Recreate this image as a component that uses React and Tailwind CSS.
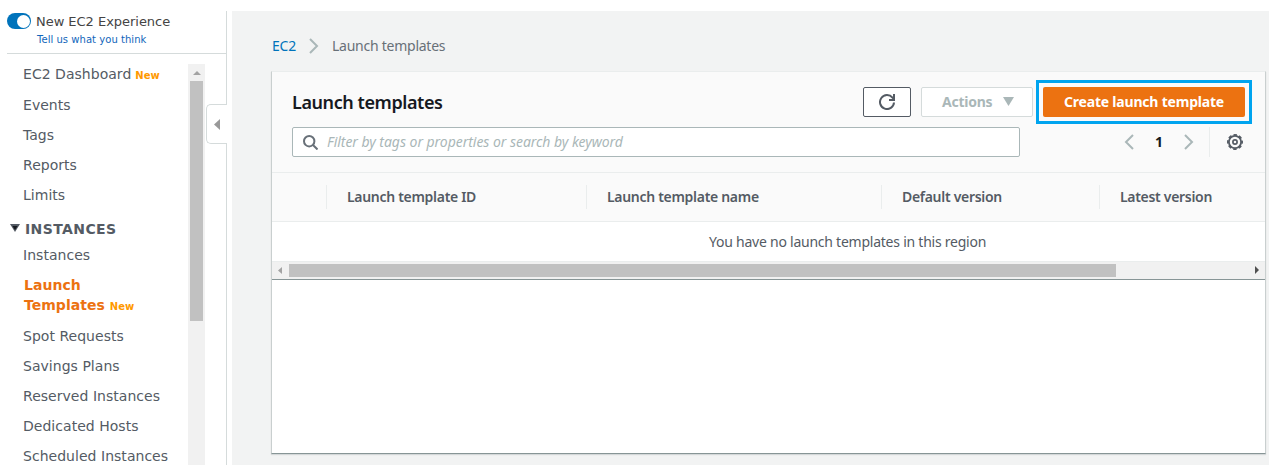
import React from 'react';

function NavItem({ children, className = 'h-[30px]' }) {
  return (
    <li className={`flex shrink-0 items-center whitespace-nowrap pl-[23px] ${className}`}>{children}</li>
  );
}

function Toggle() {
  return (
    <span className="flex h-4 w-6 items-center justify-end rounded-full bg-[#0073bb] pr-px">
      <span className="h-[13px] w-[13px] rounded-full bg-white" />
    </span>
  );
}

function Sidebar() {
  return (
    <aside className="relative flex w-[227px] shrink-0 flex-col border-r border-[#d5dbdb] font-['DejaVu_Sans',sans-serif] text-[#545b64]">
      <div className="ml-[7px] h-[43px] shrink-0 border-b border-[#d5dbdb] pt-[2px]">
        <div className="flex h-4 items-center">
          <Toggle />
          <span className="ml-[5px] mt-[2px] whitespace-nowrap text-[13px] leading-4 tracking-[-0.03px] text-[#444]">New EC2 Experience</span>
        </div>
        <a className="ml-[30px] mt-[5px] block whitespace-nowrap text-[10px] leading-3 tracking-[0.04px] text-[#1166bb]">Tell us what you think</a>
      </div>
      <div className="mt-[10px] flex min-h-0 flex-1">
        <ul className="-mt-[5px] flex w-[188px] flex-col overflow-hidden text-[14px] leading-5 tracking-[0.03px]">
          <NavItem className="h-[31px] pb-[2px]">
            EC2 Dashboard
            <b className="ml-[4px] mt-[5px] text-[10px] leading-3 text-[#ff9900]">New</b>
          </NavItem>
          <NavItem>Events</NavItem>
          <NavItem>Tags</NavItem>
          <NavItem>Reports</NavItem>
          <NavItem>Limits</NavItem>
          <li className="mt-[6px] flex h-6 shrink-0 items-center pl-[10px] pt-px text-[14px] font-bold tracking-[0.4px]">
            <svg width="10" height="8" viewBox="0 0 10 8" className="-mt-[2px] mr-[5px]">
              <path d="M0 0h10L5 8z" fill="#545b64" />
              <path d="M2.500 2h5L5 6z" fill="#16191f" />
            </svg>
            INSTANCES
          </li>
          <NavItem>Instances</NavItem>
          <li className="mt-[5px] h-[46px] shrink-0 pl-6 font-bold text-[#ec7211]">
            Launch
            <span className="flex h-5 items-center whitespace-nowrap">
              Templates
              <b className="ml-[5px] mt-[4px] text-[10px] leading-3 text-[#ff9900]">New</b>
            </span>
          </li>
          <NavItem>Spot Requests</NavItem>
          <NavItem>Savings Plans</NavItem>
          <NavItem>Reserved Instances</NavItem>
          <NavItem>Dedicated Hosts</NavItem>
          <NavItem>Scheduled Instances</NavItem>
        </ul>
        <div className="flex w-[17px] flex-col items-center bg-[#f1f1f1]">
          <span className="flex h-[17px] shrink-0 items-center pt-px">
            <svg width="8" height="4" viewBox="0 0 8 4"><path d="M0 4L4 0l4 4z" fill="#a3a3a3" /></svg>
          </span>
          <span className="h-[240px] w-[13px] shrink-0 bg-[#c1c1c1]" />
        </div>
      </div>
      <button className="absolute -right-px top-[93px] flex h-10 w-[21px] items-center justify-center rounded-l-[5px] border border-r-0 border-[#d5dbdb] bg-white">
        <svg width="6" height="11" viewBox="0 0 6 11"><path d="M6 0v11L0 5.500z" fill="#999" /></svg>
      </button>
    </aside>
  );
}

function Chevron({ flip = false, className = '' }) {
  return (
    <svg width="10" height="16" viewBox="0 0 10 16" className={className} fill="none" stroke="#aab7b8" strokeWidth="2">
      <path d={flip ? 'M9 1L2 8l7 7' : 'M1 1l7 7-7 7'} />
    </svg>
  );
}

function Toolbar() {
  return (
    <div className="h-[101px] border-b border-[#eaeded] bg-[#fafafa] pl-5">
      <div className="flex items-start">
        <h1 className="mt-[15px] flex-1 whitespace-nowrap text-[18px] font-semibold leading-[30px] tracking-[-0.42px] text-[#16191f]">Launch templates</h1>
        <button className="mt-[15px] flex h-[30px] w-12 items-center justify-center rounded-[2px] border border-[#545b64] bg-white">
          <svg width="16" height="16" viewBox="0 0 16 16" fill="none" stroke="#545b64" strokeWidth="2">
            <path d="M15 8.500A7 7 0 1 1 13.500 3.700L15 5.200" />
            <path d="M15 0v6h-5" />
          </svg>
        </button>
        <button className="ml-[10px] mt-[15px] flex h-[30px] w-28 items-center rounded-[2px] border border-[#d5dbdb] bg-white pb-[2px] pl-5 text-[14px] font-bold tracking-[-0.25px] text-[#aab7b8]">
          Actions
          <svg width="11" height="9" viewBox="0 0 11 9" className="ml-auto mr-[18px] mt-px"><path d="M0 0h11L5.500 9z" fill="#aab7b8" /></svg>
        </button>
        <div className="ml-[3px] mr-[13px] mt-2 flex h-11 w-[216px] items-center justify-center border-[3px] border-[#00a4ef]">
          <button className="h-[30px] w-[202px] whitespace-nowrap rounded-[2px] bg-[#ec7211] pb-[2px] text-[14px] font-bold tracking-[-0.2px] text-white">Create launch template</button>
        </div>
      </div>
      <div className="mt-[3px] flex h-[30px] items-center">
        <div className="flex h-[30px] w-[728px] items-center rounded-[2px] border border-[#aab7b8] bg-white pl-[10px]">
          <svg width="15" height="15" viewBox="0 0 15 15" fill="none" stroke="#687078" strokeWidth="2">
            <circle cx="6.200" cy="6.200" r="5.200" />
            <path d="M10 10l4.500 4.500" />
          </svg>
          <span className="-mt-[2px] ml-[9px] whitespace-nowrap text-[14px] italic tracking-[-0.04px] text-[#aab7b8]">Filter by tags or properties or search by keyword</span>
        </div>
        <Chevron flip className="ml-[104px]" />
        <span className="-mt-[2px] w-[50px] text-center text-[14px] font-bold text-[#16191f]">1</span>
        <Chevron />
        <span className="ml-[15px] h-[30px] w-px bg-[#eaeded]" />
        <svg width="16" height="16" viewBox="0 0 16 16" className="ml-[17px]" fill="none" stroke="#545b64">
          <circle cx="8" cy="8" r="6.100" strokeWidth="1.800" />
          <circle cx="8" cy="8" r="7.100" strokeWidth="1.800" strokeDasharray="3.400 2.176" strokeDashoffset="1.700" />
          <circle cx="8" cy="8" r="2.100" strokeWidth="1.700" />
        </svg>
      </div>
    </div>
  );
}

function HeaderCell({ children, className }) {
  return (
    <div className={`flex h-6 shrink-0 items-center whitespace-nowrap border-l border-[#eaeded] pb-[2px] pl-5 tracking-[-0.3px] ${className}`}>
      {children}
    </div>
  );
}

function TemplatesTable() {
  return (
    <div>
      <div className="flex h-[49px] items-center overflow-hidden border-b border-[#eaeded] bg-[#fafafa] pl-[54px] text-[14px] font-semibold text-[#545b64]">
        <HeaderCell className="w-[260px]">Launch template ID</HeaderCell>
        <HeaderCell className="w-[295px]">Launch template name</HeaderCell>
        <HeaderCell className="w-[218px]">Default version</HeaderCell>
        <HeaderCell className="w-[166px]">Latest version</HeaderCell>
      </div>
      <div className="h-[39px] whitespace-nowrap pl-[437px] text-[14px] leading-[40px] tracking-[-0.24px] text-[#545b64]">You have no launch templates in this region</div>
      <div className="flex h-[18px] items-center border-t border-[#eaeded] bg-[#f1f1f1] pb-px pl-[6px] pr-[5px]">
        <svg width="4" height="7" viewBox="0 0 4 7"><path d="M4 0v7L0 3.500z" fill="#a3a3a3" /></svg>
        <span className="ml-[7px] h-[13px] w-[827px] bg-[#c1c1c1]" />
        <svg width="4" height="8" viewBox="0 0 4 8" className="ml-auto mr-px"><path d="M0 0v8l4-4z" fill="#505050" /></svg>
      </div>
      <div className="h-px bg-[#879596]" />
    </div>
  );
}

export default function App() {
  return (
    <div className="flex h-[465px] w-[1269px] overflow-hidden bg-white pt-[11px]">
      <Sidebar />
      <main className="ml-[5px] flex-1 bg-[#f2f3f3] pl-[39px] font-['Noto_Sans',sans-serif]">
        <nav className="flex h-[60px] items-center whitespace-nowrap pl-px pt-[10px] text-[14px] tracking-[-0.25px]">
          <a className="-mt-[2px] w-[37px] text-[#0073bb]">EC2</a>
          <Chevron />
          <span className="-mt-[2px] ml-[13px] text-[#687078]">Launch templates</span>
        </nav>
        <section className="h-[383px] w-[995px] border border-b-[#879596] border-l-[#c9cfcf] border-r-[#c9cfcf] border-t-[#eaeded] bg-white shadow-[0_1px_1px_rgba(0,28,36,0.12)]">
          <Toolbar />
          <TemplatesTable />
        </section>
      </main>
    </div>
  );
}
